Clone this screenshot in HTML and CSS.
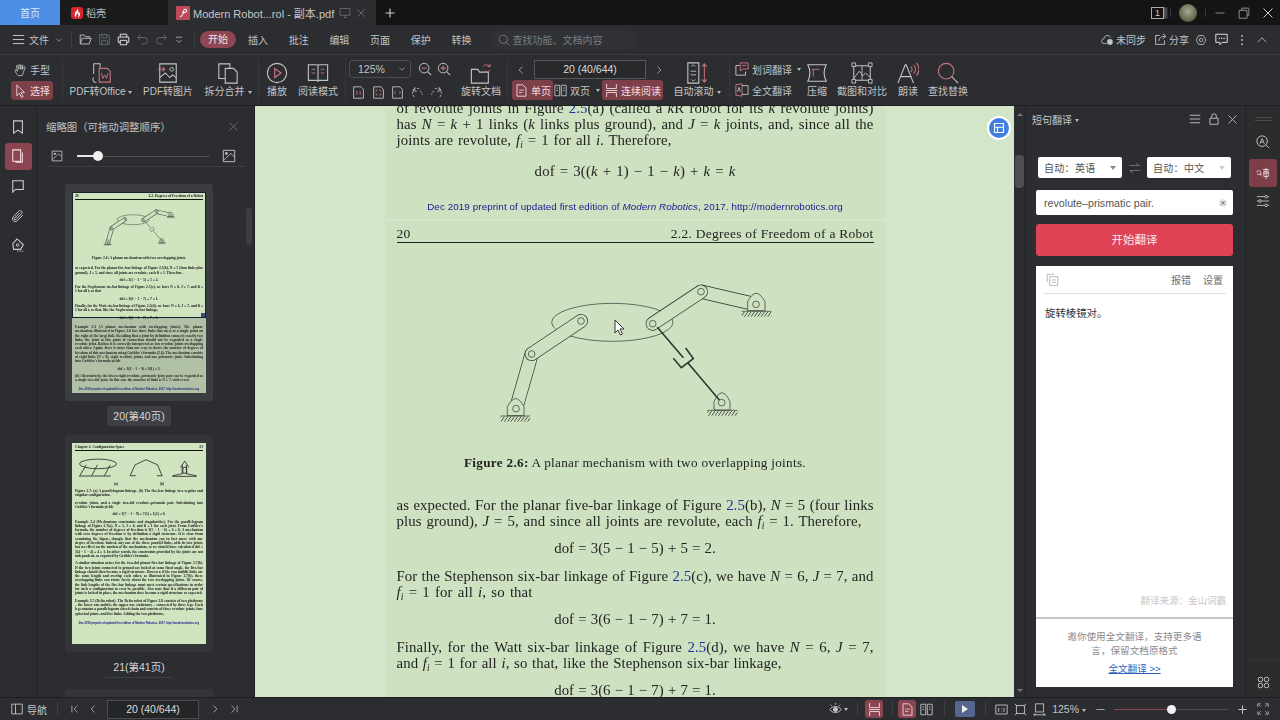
FILE: index.html
```html
<!DOCTYPE html>
<html lang="zh-CN">
<head>
<meta charset="utf-8">
<title>Modern Robotics</title>
<link rel="stylesheet" href="styles.css">
</head>
<body>
<svg class="sprite" aria-hidden="true">
  <defs>
    <pattern id="hatch" width="10" height="10" patternUnits="userSpaceOnUse" patternTransform="skewX(-35)">
      <rect width="2.4" height="10" fill="#333"/>
    </pattern>
  </defs>
  <symbol id="mech" viewBox="0 0 930 480">
    <g class="m">
      <ellipse cx="397" cy="157" rx="182" ry="57"/>
      <line class="bar-o" x1="108" y1="416" x2="155" y2="252"/><line class="bar-i" x1="108" y1="416" x2="155" y2="252"/>
      <line class="bar-o" x1="155" y1="252" x2="303" y2="153"/><line class="bar-i" x1="155" y1="252" x2="303" y2="153"/>
      <line class="bar-o" x1="663" y1="65" x2="828" y2="103"/><line class="bar-i" x1="663" y1="65" x2="828" y2="103"/>
      <line class="bar-o" x1="518" y1="161" x2="663" y2="65"/><line class="bar-i" x1="518" y1="161" x2="663" y2="65"/>
      <path d="M803 122V95Q828 45 855 95V122Z"/>
      <path d="M82 437V410Q107 362 132 410V437Z"/>
      <path d="M702 420V395Q726 342 750 395V420Z"/>
      <line class="thick" x1="532" y1="172" x2="610" y2="263"/>
      <line class="thick" x1="624" y1="279" x2="725" y2="398"/>
      <path class="thick" d="M617 234L640 266L604 293L580 265"/>
      <circle cx="155" cy="252" r="10"/><circle cx="303" cy="153" r="10"/><circle cx="518" cy="161" r="10"/>
      <circle cx="663" cy="65" r="10"/><circle cx="828" cy="103" r="10"/><circle cx="108" cy="416" r="10"/><circle cx="725" cy="398" r="10"/>
      <line x1="62" y1="438" x2="150" y2="438"/><line x1="682" y1="421" x2="772" y2="421"/><line x1="785" y1="124" x2="874" y2="124"/>
    </g>
    <rect x="62" y="440" width="88" height="15" fill="url(#hatch)"/>
    <rect x="682" y="423" width="90" height="14" fill="url(#hatch)"/>
    <rect x="785" y="126" width="89" height="14" fill="url(#hatch)"/>
  </symbol>
  <symbol id="i-ham" viewBox="0 0 16 16"><path d="M1 3h14M1 8h14M1 13h14" fill="none" stroke="currentColor" stroke-width="1.2"/></symbol>
  <symbol id="i-chev" viewBox="0 0 16 16"><path d="M3 5.5l5 5 5-5" fill="none" stroke="currentColor" stroke-width="1.3"/></symbol>
  <symbol id="i-left" viewBox="0 0 16 16"><path d="M10.5 2.5L5 8l5.5 5.5" fill="none" stroke="currentColor" stroke-width="1.2"/></symbol>
  <symbol id="i-right" viewBox="0 0 16 16"><path d="M5.5 2.5L11 8l-5.5 5.5" fill="none" stroke="currentColor" stroke-width="1.2"/></symbol>
  <symbol id="i-folder" viewBox="0 0 16 16"><path d="M1.5 13.5V2.5h5l1.500 2h5v2M1.5 13.5l2.5-7h11l-2.5 7z" fill="none" stroke="currentColor" stroke-width="1.1"/></symbol>
  <symbol id="i-save" viewBox="0 0 16 16"><path d="M2 2h10l2 2v10H2zM5 2v4h6V2M4.5 14V9.5h7V14" fill="none" stroke="currentColor" stroke-width="1.1"/></symbol>
  <symbol id="i-print" viewBox="0 0 16 16"><path d="M4 5V1.5h8V5M4 11.5H1.5V5h13v6.5H12M4 9h8v5.5H4z" fill="none" stroke="currentColor" stroke-width="1.2"/></symbol>
  <symbol id="i-undo" viewBox="0 0 16 16"><path d="M5.5 2L2 5.5 5.5 9M2 5.5h8a3.5 3.5 0 0 1 0 8H7" fill="none" stroke="currentColor" stroke-width="1.1"/></symbol>
  <symbol id="i-redo" viewBox="0 0 16 16"><path d="M10.5 2L14 5.5 10.5 9M14 5.5H6a3.5 3.5 0 0 0 0 8h3" fill="none" stroke="currentColor" stroke-width="1.1"/></symbol>
  <symbol id="i-more" viewBox="0 0 16 16"><path d="M3 3.5h10M4 8l4 4 4-4" fill="none" stroke="currentColor" stroke-width="1.2"/></symbol>
  <symbol id="i-search" viewBox="0 0 16 16"><circle cx="7" cy="7" r="5.500" fill="none" stroke="currentColor" stroke-width="1.1"/><path d="M11 11l4 4" stroke="currentColor" stroke-width="1.2"/></symbol>
  <symbol id="i-cloud" viewBox="0 0 16 16"><path d="M7 13H4a3 3 0 0 1-.5-6A4.5 4.5 0 0 1 12 5.5" fill="none" stroke="currentColor" stroke-width="1"/><circle cx="11" cy="11" r="3.5" fill="currentColor"/></symbol>
  <symbol id="i-share" viewBox="0 0 16 16"><path d="M7 3H2v11h11V9M6 10c0-4 3-6 8-6M11 1l3.5 3L11 7" fill="none" stroke="currentColor" stroke-width="1.1"/></symbol>
  <symbol id="i-gear" viewBox="0 0 16 16"><path d="M5 2h6l3.5 6-3.5 6H5L1.5 8z" fill="none" stroke="currentColor" stroke-width="1.1"/><circle cx="8" cy="8" r="2.3" fill="none" stroke="currentColor" stroke-width="1.1"/></symbol>
  <symbol id="i-msg" viewBox="0 0 16 16"><path d="M1 1.5h14v10H9l-3 3v-3H1z" fill="none" stroke="currentColor" stroke-width="1.2"/><path d="M4.5 6.5h1.5M7.5 6.5h1.5M10.5 6.5h1.5" stroke="currentColor" stroke-width="1.5"/></symbol>
  <symbol id="i-dots" viewBox="0 0 16 16"><circle cx="8" cy="2.500" r="1.2" fill="currentColor"/><circle cx="8" cy="8" r="1.2" fill="currentColor"/><circle cx="8" cy="13.500" r="1.2" fill="currentColor"/></symbol>
  <symbol id="i-up" viewBox="0 0 16 16"><path d="M2 11l6-6 6 6" fill="none" stroke="currentColor" stroke-width="1.1"/></symbol>
  <symbol id="i-x" viewBox="0 0 16 16"><path d="M2 2l12 12M14 2L2 14" fill="none" stroke="currentColor" stroke-width="1.2"/></symbol>
  <symbol id="i-hand" viewBox="0 0 20 20"><path d="M6 18c-2-2-4-5-4.5-7-.3-1.3 1.3-1.8 2-.8L5 12 3.5 4.5c-.2-1.3 1.6-1.7 2-.4L7 9 7 2.8c0-1.3 1.8-1.3 2 0L9.5 9l1.3-5.6c.3-1.2 2-.9 1.8.3L11.5 9.5l2.8-3.7c.8-1 2.200 0 1.600 1L13.500 13c-.5 2-1 3.500-2 5z" fill="none" stroke="currentColor" stroke-width="1.2"/></symbol>
  <symbol id="i-cursor" viewBox="0 0 20 20"><path d="M4 1.5l11 10.5h-5l3 6-2.5 1-2.8-6L4 17z" fill="none" stroke="currentColor" stroke-width="1.2"/></symbol>
  <symbol id="i-office" viewBox="0 0 24 24"><path d="M4 13V2h7v4M4 17a3 3 0 0 0 3 5" fill="none" stroke="currentColor" stroke-width="1.1"/><path d="M10 7h9l3 3v12H10z" fill="none" stroke="#c9737f" stroke-width="1.2"/><path d="M12.5 12l1.5 6 2-4 2 4 1.5-6" fill="none" stroke="#c9737f" stroke-width="1"/></symbol>
  <symbol id="i-topic" viewBox="0 0 24 24"><path d="M3 2h18v20H3z" fill="none" stroke="currentColor" stroke-width="1.2"/><path d="M3 17l6-5 5 5 3-3 4 3" fill="none" stroke="currentColor" stroke-width="1.1"/><circle cx="16" cy="8" r="2" fill="none" stroke="currentColor"/><path d="M1 8h7M6 5.5L8.5 8 6 10.5" fill="none" stroke="#c9737f" stroke-width="1.1"/></symbol>
  <symbol id="i-split" viewBox="0 0 24 24"><path d="M2 2h12v16H2z" fill="none" stroke="currentColor" stroke-width="1.2"/><path d="M9 7h9l4 4v12H9z" fill="#2b2d30" stroke="currentColor" stroke-width="1.2"/></symbol>
  <symbol id="i-play" viewBox="0 0 24 24"><circle cx="12" cy="12" r="10.5" fill="none" stroke="currentColor" stroke-width="1.2"/><path d="M9.5 7l7 5-7 5z" fill="none" stroke="#c9737f" stroke-width="1.3"/></symbol>
  <symbol id="i-book" viewBox="0 0 24 24"><path d="M1.5 3h9.5l1 1 1-1h9.5v17h-9l-1.5 1-1.5-1h-9zM12 4v16" fill="none" stroke="currentColor" stroke-width="1.2"/><path d="M5 8h4M5 12h4M15 8h4M15 12h4" stroke="#c9737f" stroke-width="1"/></symbol>
  <symbol id="i-zout" viewBox="0 0 16 16"><circle cx="7" cy="7" r="5.5" fill="none" stroke="currentColor" stroke-width="1.1"/><path d="M11 11l4 4" stroke="currentColor" stroke-width="1.3"/><path d="M4 7h6" stroke="#c9737f" stroke-width="1.2"/></symbol>
  <symbol id="i-zin" viewBox="0 0 16 16"><circle cx="7" cy="7" r="5.5" fill="none" stroke="currentColor" stroke-width="1.1"/><path d="M11 11l4 4" stroke="currentColor" stroke-width="1.3"/><path d="M4 7h6M7 4v6" stroke="#c9737f" stroke-width="1.2"/></symbol>
  <symbol id="i-f11" viewBox="0 0 16 16"><path d="M2 1h9l3 3v11H2z" fill="none" stroke="currentColor" stroke-width="1.1"/><path d="M6 6v5M10 6v5" stroke="#c9737f" stroke-width="1.1"/></symbol>
  <symbol id="i-fit" viewBox="0 0 16 16"><path d="M2 1h9l3 3v11H2z" fill="none" stroke="currentColor" stroke-width="1.1"/><path d="M5 7V5h2M11 9v2H9M5 9v2h2M11 7V5H9" fill="none" stroke="#c9737f" stroke-width="1"/></symbol>
  <symbol id="i-fw" viewBox="0 0 16 16"><path d="M2 1h9l3 3v11H2z" fill="none" stroke="currentColor" stroke-width="1.1"/><path d="M6 6L4 8l2 2M10 6l2 2-2 2" fill="none" stroke="#c9737f" stroke-width="1"/></symbol>
  <symbol id="i-rl" viewBox="0 0 16 16"><path d="M4 13.5A6 6 0 0 1 8 3h2M11 6A6 6 0 0 1 14 11" fill="none" stroke="currentColor" stroke-width="1.1" stroke-dasharray="3 1.5"/><path d="M5 1.5L2.5 5.5 7 6.5" fill="none" stroke="currentColor" stroke-width="1.1"/></symbol>
  <symbol id="i-rr" viewBox="0 0 16 16"><path d="M12 13.5A6 6 0 0 0 8 3H6M5 6A6 6 0 0 0 2 11" fill="none" stroke="currentColor" stroke-width="1.1" stroke-dasharray="3 1.5"/><path d="M11 1.5l2.5 4L9 6.5" fill="none" stroke="currentColor" stroke-width="1.1"/></symbol>
  <symbol id="i-rot" viewBox="0 0 24 24"><path d="M1.5 8h7l2 3h9.5v12H1.5z" fill="none" stroke="currentColor" stroke-width="1.2"/><path d="M14 5a5 5 0 0 1 8 0M22 2v3h-3M22 9a5 5 0 0 1-6 1" fill="none" stroke="#c9737f" stroke-width="1"/></symbol>
  <symbol id="i-page" viewBox="0 0 16 16"><path d="M2.5 1h7l4 4v10h-11z" fill="none" stroke="currentColor" stroke-width="1.1"/><path d="M5 7.5h6M5 10.5h4" stroke="currentColor"/></symbol>
  <symbol id="i-dbl" viewBox="0 0 16 16"><path d="M1 1.5h6v13H1zM9 1.5h6v13H9zM3 5h2M11 5h2M3 8h2M11 8h2" fill="none" stroke="currentColor" stroke-width="1.1"/></symbol>
  <symbol id="i-cont" viewBox="0 0 16 16"><path d="M2 0v5.5h12V0M2 16v-5.5h12V16M1 8h14" fill="none" stroke="currentColor" stroke-width="1.1"/></symbol>
  <symbol id="i-auto" viewBox="0 0 24 24"><path d="M2 1h12v22H2z" fill="none" stroke="currentColor" stroke-width="1.2"/><path d="M6 5l2-2 2 2M6 19l2 2 2-2M5 10h6M5 14h6" fill="none" stroke="currentColor"/><path d="M20 2v20M17.5 5L20 2l2.5 3M17.5 19l2.5 3 2.5-3" fill="none" stroke="#c9737f" stroke-width="1.1"/></symbol>
  <symbol id="i-tr1" viewBox="0 0 16 16"><path d="M5 4H1v11h11v-4" fill="none" stroke="currentColor" stroke-width="1.1"/><path d="M6 1h9v7H9l-3 2z" fill="none" stroke="#c9737f" stroke-width="1.1"/><path d="M8 4h5" stroke="#c9737f"/></symbol>
  <symbol id="i-tr2" viewBox="0 0 16 16"><path d="M1 2l7-1v14l-7-1z" fill="none" stroke="#c9737f" stroke-width="1.1"/><path d="M8 3h7v10H8M3 10l1.5-5L6 10" fill="none" stroke="currentColor"/></symbol>
  <symbol id="i-comp" viewBox="0 0 24 24"><path d="M2 3h20c-3 6-3 12 0 18H2c3-6 3-12 0-18z" fill="none" stroke="currentColor" stroke-width="1.2"/><path d="M6 8h9M8 8v8" fill="none" stroke="#c9737f"/></symbol>
  <symbol id="i-shot" viewBox="0 0 24 24"><path d="M3 4h18v16H3z" fill="none" stroke="currentColor" stroke-width="1.1"/><path d="M1 1h4v4H1zM19 1h4v4h-4zM1 19h4v4H1zM19 19h4v4h-4z" fill="#2b2d30" stroke="currentColor"/><path d="M3 18l6-8 4 5 3-3 5 5M12 4v16" fill="none" stroke="currentColor"/></symbol>
  <symbol id="i-read" viewBox="0 0 24 24"><path d="M1 23L9 3h1l8 20M4 16h12" fill="none" stroke="currentColor" stroke-width="1.2"/><path d="M15 5c2 1.5 2 4 0 6M18 3c3 3 3 7 0 10M21 1c4 4 4 10 0 14" fill="none" stroke="#c9737f" stroke-width="1.1"/></symbol>
  <symbol id="i-find" viewBox="0 0 24 24"><circle cx="10" cy="10" r="8.5" fill="none" stroke="#c9737f" stroke-width="1.2"/><path d="M16 16l7 7" stroke="currentColor" stroke-width="1.2"/></symbol>
  <symbol id="i-bookmark" viewBox="0 0 16 16"><path d="M3 1h10v14l-5-3.5L3 15z" fill="none" stroke="currentColor" stroke-width="1.2"/></symbol>
  <symbol id="i-thumbs" viewBox="0 0 16 16"><path d="M2 1h9v13H2zM13 4v11H5" fill="none" stroke="currentColor" stroke-width="1.2"/></symbol>
  <symbol id="i-note" viewBox="0 0 16 16"><path d="M2 2h12v10H5l-3 3z" fill="none" stroke="currentColor" stroke-width="1.2"/></symbol>
  <symbol id="i-clip" viewBox="0 0 16 16"><path d="M13.5 7L7 13.5c-3 2.5-7-1.5-4.5-4.5L9 2.5c2-2 5 1 3 3L5.5 12c-1 1-2.5-.5-1.5-1.5L10 4.5" fill="none" stroke="currentColor" stroke-width="1.1"/></symbol>
  <symbol id="i-sign" viewBox="0 0 16 16"><path d="M7 1L2 6.5l1 6.5h8l3-5.5z" fill="none" stroke="currentColor" stroke-width="1.2"/><circle cx="7.5" cy="8" r="1.5" fill="none" stroke="currentColor"/><path d="M7 15h8" stroke="currentColor" stroke-dasharray="1.5 1"/></symbol>
  <symbol id="i-img" viewBox="0 0 16 16"><path d="M1.5 1.5h13v13h-13z" fill="none" stroke="currentColor" stroke-width="1.1"/><circle cx="5" cy="5" r="1.5" fill="currentColor"/><path d="M2 13L10 5l4 4" fill="none" stroke="currentColor"/></symbol>
  <symbol id="i-lock" viewBox="0 0 16 16"><path d="M2.5 7h11v8h-11zM5 7V4a3 3 0 0 1 6 0v3" fill="none" stroke="currentColor" stroke-width="1.2"/></symbol>
  <symbol id="i-copy" viewBox="0 0 16 16"><path d="M1.5 11V1.5H10M4.5 4.5h10v11h-10zM7 8.5h5M7 11.5h5" fill="none" stroke="currentColor" stroke-width="1"/></symbol>
  <symbol id="i-lens" viewBox="0 0 16 16"><circle cx="7" cy="7" r="6" fill="none" stroke="currentColor" stroke-width="1.1"/><path d="M4.5 10L7 4l2.5 6M5.5 8h3M11.5 11.5l3.5 3.5" fill="none" stroke="currentColor"/></symbol>
  <symbol id="i-aw" viewBox="0 0 16 16"><path d="M1 7.500c0-3 4.500-3 4.500 0v3.500M1.500 9.500h4M8 4h7M8 8h7M9 6h5v6H9zM11.500 2v13" fill="none" stroke="currentColor" stroke-width="1"/></symbol>
  <symbol id="i-tune" viewBox="0 0 16 16"><path d="M1 3h9M13 3h2M1 8h2M6 8h9M1 13h9M13 13h2" stroke="currentColor"/><circle cx="11.5" cy="3" r="1.5" fill="none" stroke="currentColor"/><circle cx="4.5" cy="8" r="1.5" fill="none" stroke="currentColor"/><circle cx="11.5" cy="13" r="1.5" fill="none" stroke="currentColor"/></symbol>
  <symbol id="i-grid" viewBox="0 0 16 16"><rect x="1.5" y="1.500" width="5.500" height="5.500" rx="2.500" fill="none" stroke="currentColor" stroke-width="1.2"/><rect x="9" y="1.500" width="5.500" height="5.500" rx="2.500" fill="none" stroke="currentColor" stroke-width="1.2"/><rect x="1.500" y="9" width="5.500" height="5.500" rx="2.500" fill="none" stroke="currentColor" stroke-width="1.2"/><rect x="9" y="9" width="5.500" height="5.500" rx="2.500" fill="none" stroke="currentColor" stroke-width="1.2"/></symbol>
  <symbol id="i-nav" viewBox="0 0 16 16"><path d="M1 1.5h14v13H1zM6 1.5v13" fill="none" stroke="currentColor" stroke-width="1.2"/></symbol>
  <symbol id="i-first" viewBox="0 0 16 16"><path d="M3 2.5v11M12 2.5L6.5 8l5.5 5.5" fill="none" stroke="currentColor" stroke-width="1.2"/></symbol>
  <symbol id="i-last" viewBox="0 0 16 16"><path d="M13 2.5v11M4 2.5L9.5 8 4 13.5" fill="none" stroke="currentColor" stroke-width="1.2"/></symbol>
  <symbol id="i-eye" viewBox="0 0 16 16"><path d="M1 8c3-5 11-5 14 0-3 5-11 5-14 0z" fill="none" stroke="currentColor" stroke-width="1.1"/><circle cx="8" cy="8" r="3" fill="currentColor"/><path d="M8 0v2M2 2l1.5 1.5M14 2l-1.5 1.5" stroke="currentColor"/></symbol>
  <symbol id="i-11" viewBox="0 0 16 16"><path d="M1 2.5h14v11H1zM4.5 6v5M11 6v5M8 6.5v.8M8 9.5v.8" fill="none" stroke="currentColor" stroke-width="1.1"/></symbol>
  <symbol id="i-fitp" viewBox="0 0 16 16"><path d="M3 3h10v10H3zM1 1l3 3M15 1l-3 3M1 15l3-3M15 15l-3-3" fill="none" stroke="currentColor" stroke-width="1.1"/></symbol>
  <symbol id="i-fitw" viewBox="0 0 16 16"><path d="M3 1h10v10H3zM1 14.5h14M3 12.5l-2 2 2 1.5M13 12.5l2 2-2 1.5" fill="none" stroke="currentColor" stroke-width="1.1"/></symbol>
  <symbol id="i-full" viewBox="0 0 16 16"><path d="M1 5V1h4M15 5V1h-4M1 11v4h4M15 11v4h-4M2 2l3 3M14 2l-3 3M2 14l3-3M14 14l-3-3" fill="none" stroke="currentColor"/></symbol>
  <symbol id="i-mon" viewBox="0 0 16 16"><path d="M1.5 2h13v9h-13zM6 14h4M8 11v3" fill="none" stroke="currentColor" stroke-width="1.1"/></symbol>
  <symbol id="i-plus" viewBox="0 0 16 16"><path d="M2 8h12M8 2v12" stroke="currentColor" stroke-width="1.5"/></symbol>
  <symbol id="i-min" viewBox="0 0 16 16"><path d="M2 8h12" stroke="currentColor" stroke-width="1.1"/></symbol>
  <symbol id="i-rest" viewBox="0 0 16 16"><path d="M5 4V1.5h9.5V11H12M1.5 4.5H12V15H1.5z" fill="none" stroke="currentColor" stroke-width="1.1"/></symbol>
  <symbol id="i-flame" viewBox="0 0 16 16"><path d="M8 2c1 3-3 4-3 8 0 2 1 3 2 4-1-3 1-4 1-6 2 2 3 3 1 6 3-1 4-4 2-7-1 1-1 1-1 0 0-2-1-4-2-5z" fill="#fff"/></symbol>
</svg>

<div class="app">
  <header class="tabbar">
    <div class="tab tab-home">首页</div>
    <div class="tab tab-dao"><span class="logo-dao"><svg class="ic12"><use href="#i-flame"/></svg></span><span>稻壳</span></div>
    <div class="tab tab-doc">
      <span class="logo-pdf"><svg class="ic12" viewBox="0 0 16 16"><path d="M4 13c3-1 5-5 5-8a2 2 0 1 1 4 0c0 2-3 3-6 2" fill="none" stroke="#fff" stroke-width="1.4"/></svg></span>
      <span class="doc-name">Modern Robot...rol - 副本.pdf</span>
      <svg class="ic12 dim"><use href="#i-mon"/></svg>
      <svg class="ic10 dim2"><use href="#i-x"/></svg>
    </div>
    <svg class="ic12 tab-plus"><use href="#i-plus"/></svg>
    <div class="win-ctrls">
      <span class="win-1">1</span>
      <span class="vsep"></span>
      <span class="avatar"></span>
      <span class="vsep"></span>
      <svg class="ic12"><use href="#i-min"/></svg>
      <svg class="ic12"><use href="#i-rest"/></svg>
      <svg class="ic12 bright"><use href="#i-x"/></svg>
    </div>
  </header>

  <nav class="menubar">
    <svg class="ic13"><use href="#i-ham"/></svg>
    <span class="menu-file">文件</span>
    <svg class="ic8 m-chev"><use href="#i-chev"/></svg>
    <span class="menu-sep"></span>
    <div class="quick">
      <svg class="ic13"><use href="#i-folder"/></svg>
      <svg class="ic13 faint"><use href="#i-save"/></svg>
      <svg class="ic13 bright"><use href="#i-print"/></svg>
      <svg class="ic13 faint"><use href="#i-undo"/></svg>
      <svg class="ic13 faint"><use href="#i-redo"/></svg>
      <svg class="ic10"><use href="#i-more"/></svg>
    </div>
    <span class="menu-sep"></span>
    <span class="pill">开始</span>
    <div class="menu-items"><span>插入</span><span>批注</span><span>编辑</span><span>页面</span><span>保护</span><span>转换</span></div>
    <div class="searchbox"><svg class="ic12"><use href="#i-search"/></svg><span>查找功能、文档内容</span></div>
    <div class="menu-right">
      <span class="mr"><svg class="ic13"><use href="#i-cloud"/></svg>未同步</span>
      <span class="mr mr2"><svg class="ic13"><use href="#i-share"/></svg>分享</span>
      <svg class="ic12"><use href="#i-gear"/></svg>
      <svg class="ic13 bright"><use href="#i-msg"/></svg>
      <svg class="ic12"><use href="#i-dots"/></svg>
      <svg class="ic12"><use href="#i-up"/></svg>
    </div>
  </nav>

  <section class="toolbar">
    <div class="hand">
      <div class="hand-row"><svg class="ic14"><use href="#i-hand"/></svg>手型</div>
      <div class="hand-row sel"><svg class="ic14"><use href="#i-cursor"/></svg>选择</div>
    </div>
    <span class="t-sep"></span>
    <div class="tcol"><svg class="ic22"><use href="#i-office"/></svg><span>PDF转Office<i class="caret"></i></span></div>
    <div class="tcol"><svg class="ic22"><use href="#i-topic"/></svg><span>PDF转图片</span></div>
    <div class="tcol"><svg class="ic22"><use href="#i-split"/></svg><span>拆分合并<i class="caret"></i></span></div>
    <span class="t-sep"></span>
    <div class="tcol"><svg class="ic22"><use href="#i-play"/></svg><span>播放</span></div>
    <div class="tcol"><svg class="ic22"><use href="#i-book"/></svg><span>阅读模式</span></div>
    <span class="t-sep"></span>
    <div class="zoomg">
      <div class="zoom-row">
        <div class="zoom-sel">125%<svg class="ic8"><use href="#i-chev"/></svg></div>
        <svg class="ic14"><use href="#i-zout"/></svg>
        <svg class="ic14"><use href="#i-zin"/></svg>
      </div>
      <div class="zoom-row2">
        <svg class="ic13"><use href="#i-f11"/></svg>
        <svg class="ic13"><use href="#i-fit"/></svg>
        <svg class="ic13"><use href="#i-fw"/></svg>
        <svg class="ic13"><use href="#i-rl"/></svg>
        <svg class="ic13"><use href="#i-rr"/></svg>
      </div>
    </div>
    <div class="tcol"><svg class="ic22"><use href="#i-rot"/></svg><span>旋转文档</span></div>
    <span class="t-sep"></span>
    <div class="navg">
      <div class="nav-row">
        <svg class="ic10"><use href="#i-left"/></svg>
        <div class="nav-input">20 (40/644)</div>
        <svg class="ic10"><use href="#i-right"/></svg>
      </div>
      <div class="view-row">
        <span class="view sel v-one"><svg class="ic13"><use href="#i-page"/></svg>单页</span>
        <span class="view v-two"><svg class="ic13"><use href="#i-dbl"/></svg>双页<i class="caret"></i></span>
        <span class="view sel v-cont"><svg class="ic13"><use href="#i-cont"/></svg>连续阅读</span>
      </div>
    </div>
    <div class="tcol"><svg class="ic22"><use href="#i-auto"/></svg><span>自动滚动<i class="caret"></i></span></div>
    <span class="t-sep"></span>
    <div class="trang">
      <span><svg class="ic14"><use href="#i-tr1"/></svg>划词翻译<i class="caret"></i></span>
      <span><svg class="ic14"><use href="#i-tr2"/></svg>全文翻译</span>
    </div>
    <div class="tcol"><svg class="ic22"><use href="#i-comp"/></svg><span>压缩</span></div>
    <div class="tcol"><svg class="ic22"><use href="#i-shot"/></svg><span>截图和对比</span></div>
    <div class="tcol"><svg class="ic22"><use href="#i-read"/></svg><span>朗读</span></div>
    <div class="tcol"><svg class="ic22"><use href="#i-find"/></svg><span>查找替换</span></div>
  </section>

  <main class="main">
    <aside class="rail">
      <svg class="ic14"><use href="#i-bookmark"/></svg>
      <span class="rail-sel"><svg class="ic14"><use href="#i-thumbs"/></svg></span>
      <svg class="ic14"><use href="#i-note"/></svg>
      <svg class="ic14"><use href="#i-clip"/></svg>
      <svg class="ic14"><use href="#i-sign"/></svg>
    </aside>

    <aside class="thumbs">
      <div class="th-title"><span>缩略图（可拖动调整顺序）</span><svg class="ic11 dim"><use href="#i-x"/></svg></div>
      <div class="th-slider">
        <svg class="ic12"><use href="#i-img"/></svg>
        <div class="th-track"><span class="th-fill"></span><span class="th-knob"></span></div>
        <svg class="ic14"><use href="#i-img"/></svg>
      </div>
      <div class="th-list">
        <div class="th-card">
          <div class="thumb">
            <div class="tt-head"><span>20</span><span>2.2. Degrees of Freedom of a Robot</span></div>
            <svg class="tt-mech"><use href="#mech"/></svg>
            <p class="tt-cap">Figure 2.6: A planar mechanism with two overlapping joints.</p>
            <p>as expected. For the planar five-bar linkage of Figure 2.5(b), N = 5 (four links plus ground), J = 5, and since all joints are revolute, each fi = 1. Therefore,</p>
            <p class="tt-eq">dof = 3(5 − 1 − 5) + 5 = 2.</p>
            <p>For the Stephenson six-bar linkage of Figure 2.5(c), we have N = 6, J = 7, and fi = 1 for all i, so that</p>
            <p class="tt-eq">dof = 3(6 − 1 − 7) + 7 = 1.</p>
            <p>Finally, for the Watt six-bar linkage of Figure 2.5(d), we have N = 6, J = 7, and fi = 1 for all i, so that, like the Stephenson six-bar linkage,</p>
            <p class="tt-eq">dof = 3(6 − 1 − 7) + 7 = 1.</p>
            <p class="tt-gap">Example 2.3 (A planar mechanism with overlapping joints). The planar mechanism illustrated in Figure 2.6 has three links that meet at a single point on the right of the large link. Recalling that a joint by definition connects exactly two links, the joint at this point of connection should not be regarded as a single revolute joint. Rather, it is correctly interpreted as two revolute joints overlapping each other. Again, there is more than one way to derive the number of degrees of freedom of this mechanism using Grübler's formula (2.4). The mechanism consists of eight links (N = 8), eight revolute joints, and one prismatic joint. Substituting into Grübler's formula yields</p>
            <p class="tt-eq">dof = 3(8 − 1 − 9) + 9(1) = 3.</p>
            <p>(ii) Alternatively, the lower-right revolute–prismatic joint pair can be regarded as a single two-dof joint. In this case the number of links is N = 7, with seven</p>
            <p class="tt-foot">Dec 2019 preprint of updated first edition of Modern Robotics, 2017. http://modernrobotics.org</p>
            <span class="thumb-dim"></span>
            <span class="thumb-view"><i></i></span>
          </div>
        </div>
        <div class="th-label">20(第40页)</div>
        <div class="th-card">
          <div class="thumb">
            <div class="tt-head"><span>Chapter 2. Configuration Space</span><span>21</span></div>
            <svg class="tt-mech2" viewBox="0 0 400 66">
              <ellipse cx="72" cy="17" rx="58" ry="15" />
              <path d="M15 54L35 20M52 54L70 20M92 54L110 20M12 55h100M172 54L188 20 222 4 258 20 272 54M172 54h18M256 54h18M305 54L335 48V20M380 54L348 48V20M304 56h76M330 28L343 8 356 28M337 28h12V46h-12z"/>
            </svg>
            <p class="tt-small"><span>(a)</span><span>(b)</span></p>
            <p class="tt-bold">Figure 2.7: (a) A parallelogram linkage. (b) The five-bar linkage in a regular and singular configuration.</p>
            <p class="tt-m">revolute joints, and a single two-dof revolute–prismatic pair. Substituting into Grübler's formula yields</p>
            <p class="tt-eq">dof = 3(7 − 1 − 9) + 7(1) + 1(2) = 0.</p>
            <p class="tt-m">Example 2.4 (Mechanisms constraints and singularities). For the parallelogram linkage of Figure 2.7(a), N = 5, J = 6, and fi = 1 for each joint. From Grübler's formula, the number of degrees of freedom is 3(5 − 1 − 6) + 6 = 0. A mechanism with zero degrees of freedom is by definition a rigid structure. It is clear from examining the figure, though, that the mechanism can in fact move with one degree of freedom. Indeed, any one of the three parallel links, with its two joints, has no effect on the motion of the mechanism, so we should have calculated dof = 3(4 − 1 − 4) + 4 = 1. In other words, the constraints provided by the joints are not independent, as required by Grübler's formula.</p>
            <p>A similar situation arises for the two-dof planar five-bar linkage of Figure 2.7(b). If the two joints connected to ground are locked at some fixed angle, the five-bar linkage should then become a rigid structure. However, if the two middle links are the same length and overlap each other, as illustrated in Figure 2.7(b), these overlapping links can rotate freely about the two overlapping joints. Of course, the link lengths of the five-bar linkage must meet certain specifications in order for such a configuration to even be possible. Also note that if a different pair of joints is locked in place, the mechanism does become a rigid structure as expected.</p>
            <p class="tt-m">Example 2.5 (Delta robot). The Delta robot of Figure 2.8 consists of two platforms – the lower one mobile, the upper one stationary – connected by three legs. Each leg contains a parallelogram closed chain and consists of three revolute joints, four spherical joints, and five links. Adding the two platforms,</p>
            <p class="tt-foot tt-foot2">Dec 2019 preprint of updated first edition of Modern Robotics, 2017. http://modernrobotics.org</p>
          </div>
        </div>
        <div class="th-label th-label2">21(第41页)</div>
        <div class="th-card">
          <div class="thumb">
            <div class="tt-head"><span>22</span><span>2.2. Degrees of Freedom of a Robot</span></div>
          </div>
        </div>
      </div>
      <span class="th-scroll"></span>
    </aside>

    <div class="doc">
      <article class="page page-a">
        <p class="ln clip">of revolute joints in Figure <b class="lnk">2.5</b>(a) (called a <i>k</i>R robot for its <i>k</i> revolute joints)</p>
        <p class="ln">has <i>N</i> = <i>k</i> + 1 links (<i>k</i> links plus ground), and <i>J</i> = <i>k</i> joints, and, since all the</p>
        <p class="ln end-a">joints are revolute, <i>f<sub>i</sub></i> = 1 for all <i>i</i>. Therefore,</p>
        <p class="eq eq1">dof = 3((<i>k</i> + 1) − 1 − <i>k</i>) + <i>k</i> = <i>k</i></p>
        <p class="foot">Dec 2019 preprint of updated first edition of <i>Modern Robotics</i>, 2017. http://modernrobotics.org</p>
      </article>
      <article class="page page-b">
        <div class="head"><span>20</span><span>2.2. Degrees of Freedom of a Robot</span></div>
        <svg class="fig"><use href="#mech"/></svg>
        <p class="cap"><b>Figure 2.6:</b> A planar mechanism with two overlapping joints.</p>
        <p class="ln">as expected. For the planar five-bar linkage of Figure <b class="lnk">2.5</b>(b), <i>N</i> = 5 (four links</p>
        <p class="ln end-b">plus ground), <i>J</i> = 5, and since all joints are revolute, each <i>f<sub>i</sub></i> = 1. Therefore,</p>
        <p class="eq eq2">dof = 3(5 − 1 − 5) + 5 = 2.</p>
        <p class="ln">For the Stephenson six-bar linkage of Figure <b class="lnk">2.5</b>(c), we have <i>N</i> = 6, <i>J</i> = 7, and</p>
        <p class="ln end-c"><i>f<sub>i</sub></i> = 1 for all <i>i</i>, so that</p>
        <p class="eq eq2">dof = 3(6 − 1 − 7) + 7 = 1.</p>
        <p class="ln">Finally, for the Watt six-bar linkage of Figure <b class="lnk">2.5</b>(d), we have <i>N</i> = 6, <i>J</i> = 7,</p>
        <p class="ln end-d">and <i>f<sub>i</sub></i> = 1 for all <i>i</i>, so that, like the Stephenson six-bar linkage,</p>
        <p class="eq eq2">dof = 3(6 − 1 − 7) + 7 = 1.</p>
      </article>
      <span class="fab"><svg class="ic12" viewBox="0 0 16 16"><path d="M2 2h12v12H2zM2 7h12M6 7v7" fill="none" stroke="#fff" stroke-width="1.5"/></svg></span>
      <svg class="pointer" viewBox="0 0 12 18"><path d="M1 1v13l3-3 2.5 5 2-1-2.5-5h4z" fill="#fff" stroke="#333" stroke-width="1"/></svg>
    </div>

    <div class="vscroll"><span class="vs-up"></span><span class="vs-thumb"></span><span class="vs-down"></span></div>

    <aside class="trans">
      <div class="tr-head">
        <span class="tr-title">短句翻译<i class="caret"></i></span>
        <svg class="ic12"><use href="#i-ham"/></svg>
        <svg class="ic12"><use href="#i-lock"/></svg>
        <svg class="ic11"><use href="#i-x"/></svg>
      </div>
      <div class="tr-langs">
        <div class="tr-sel">自动：英语<i class="caret dark"></i></div>
        <span class="tr-swap">⇌</span>
        <div class="tr-sel">自动：中文<i class="caret dark faint2"></i></div>
      </div>
      <div class="tr-input"><span>revolute–prismatic pair.</span><span class="tr-clear">×</span></div>
      <div class="tr-btn">开始翻译</div>
      <div class="tr-body">
        <div class="tr-bar"><svg class="ic13"><use href="#i-copy"/></svg><span class="tr-a">报错</span><span>设置</span></div>
        <p class="tr-text">旋转棱镜对。</p>
        <p class="tr-src">翻译来源：金山词霸</p>
      </div>
      <div class="tr-promo">
        <p>邀你使用全文翻译，支持更多语言，保留文档原格式</p>
        <a>全文翻译 &gt;&gt;</a>
      </div>
    </aside>

    <aside class="rrail">
      <span class="rr-lines"></span>
      <svg class="ic14"><use href="#i-lens"/></svg>
      <span class="rr-sel"><svg class="ic14"><use href="#i-aw"/></svg></span>
      <svg class="ic14"><use href="#i-tune"/></svg>
      <span class="rr-fill"></span>
      <svg class="ic13"><use href="#i-grid"/></svg>
    </aside>
  </main>

  <footer class="status">
    <svg class="ic12"><use href="#i-nav"/></svg>
    <span class="s-nav">导航</span>
    <span class="s-sep s-sep1"></span>
    <svg class="ic10 s-first"><use href="#i-first"/></svg>
    <svg class="ic10 s-prev"><use href="#i-left"/></svg>
    <div class="s-input">20 (40/644)</div>
    <svg class="ic10 s-next"><use href="#i-right"/></svg>
    <svg class="ic10 s-last"><use href="#i-last"/></svg>
    <div class="s-right">
      <svg class="ic13"><use href="#i-eye"/></svg><i class="caret"></i>
      <span class="s-sep s-sep-a"></span>
      <span class="s-sel"><svg class="ic13"><use href="#i-cont"/></svg></span>
      <span class="s-sep"></span>
      <span class="s-sel s-sel2"><svg class="ic13"><use href="#i-page"/></svg></span>
      <svg class="ic13 s-dbl"><use href="#i-dbl"/></svg>
      <span class="s-sep"></span>
      <span class="s-play"></span>
      <span class="s-sep"></span>
      <svg class="ic13"><use href="#i-11"/></svg>
      <svg class="ic13"><use href="#i-fitp"/></svg>
      <svg class="ic13"><use href="#i-fitw"/></svg>
      <span class="s-zoom">125%<i class="caret"></i></span>
      <svg class="ic11"><use href="#i-min"/></svg>
      <div class="s-track"><span class="s-fill"></span><span class="s-knob"></span></div>
      <svg class="ic11"><use href="#i-plus"/></svg>
      <svg class="ic12 s-full"><use href="#i-full"/></svg>
    </div>
  </footer>
</div>
</body>
</html>
```

FILE: styles.css
```css
* { box-sizing: border-box; }
html, body { margin: 0; padding: 0; height: 100%; overflow: hidden; }
body { font-family: "Liberation Sans", "Noto Sans CJK SC", sans-serif; font-size: 10px; color: #c4c4c4; background: #2b2d30; }
p { margin: 0; }
svg { flex: none; display: block; }
i { font-style: normal; }
.sprite { position: absolute; width: 0; height: 0; }
.app { display: flex; flex-direction: column; width: 1280px; height: 720px; }

.ic8 { width: 8px; height: 8px; }
.ic10 { width: 10px; height: 10px; }
.ic11 { width: 11px; height: 11px; }
.ic12 { width: 12px; height: 12px; }
.ic13 { width: 13px; height: 13px; }
.ic14 { width: 14px; height: 14px; }
.ic22 { width: 22px; height: 22px; }
.dim { color: #6e7072; }
.dim2 { color: #77797b; }
.faint { color: #6a6c6e; }
.bright { color: #e2e2e2; }

.caret { display: inline-block; width: 0; height: 0; margin-left: 3px; vertical-align: middle; border-left: 2.5px solid transparent; border-right: 2.5px solid transparent; border-top: 3px solid #bbb; }
.caret.dark { border-top-color: #888; margin-left: auto; border-left-width: 3px; border-right-width: 3px; border-top-width: 4px; }
.caret.faint2 { border-top-color: #ccc; }

/* tabs */
.tabbar { display: flex; align-items: stretch; height: 25px; background: #141414; flex: none; }
.tab { display: flex; align-items: center; }
.tab-home { width: 60px; justify-content: center; background: #4c8fe4; color: #dbe8fb; }
.tab-dao { width: 108px; padding-left: 11px; gap: 3px; background: #1b1b1b; color: #bdbdbd; }
.logo-dao { width: 12px; height: 12px; border-radius: 3px; background: #d7262e; }
.tab-doc { width: 208px; padding-left: 8px; background: #2b2d30; color: #c6c6c6; }
.logo-pdf { width: 14px; height: 14px; border-radius: 1px; background: #bd4a58; display: flex; align-items: center; justify-content: center; }
.doc-name { width: 146px; margin-left: 3px; font-size: 11px; white-space: nowrap; }
.tab-doc .ic10 { margin-left: 5px; }
.tab-plus { align-self: center; margin-left: 8px; color: #cfcfcf; }
.win-ctrls { margin-left: auto; display: flex; align-items: center; padding-right: 6px; gap: 12px; color: #a4a4a4; }
.win-1 { position: relative; width: 13px; height: 12px; line-height: 10px; margin-right: -2px; border: 1px solid #aaa; color: #ccc; text-align: center; font-size: 9px; box-shadow: 2px 0 0 -0.5px #555, 4px 0 0 -0.5px #444; }
.vsep { width: 1px; height: 8px; background: #3c3c3c; margin: 0 -4px; }
.avatar { width: 18px; height: 18px; border-radius: 50%; background: radial-gradient(circle at 50% 40%, #a6a88f, #5a6246 70%); }

/* menubar */
.menubar { display: flex; align-items: center; height: 30px; flex: none; padding-left: 12px; background: #2b2d30; border-bottom: 1px solid #3a3c3f; }
.menu-file { margin-left: 4px; }
.m-chev { margin-left: 6px; }
.menu-sep { width: 1px; height: 18px; background: #3d3f42; margin-left: 8px; }
.quick { display: flex; align-items: center; gap: 6px; margin-left: 7px; margin-right: 2px; }
.pill { width: 36px; height: 17px; line-height: 17px; margin-left: 5px; text-align: center; border-radius: 9px; background: #8e4652; color: #f3e6e8; }
.menu-items { display: flex; gap: 20.7px; margin-left: 12px; }
.searchbox { display: flex; align-items: center; gap: 2px; width: 146px; height: 20px; margin-left: 20px; padding-left: 7px; border-radius: 10px; background: #303235; color: #7d7f81; }
.menu-right { margin-left: auto; display: flex; align-items: center; gap: 8px; padding-right: 12px; }
.mr { display: flex; align-items: center; gap: 2px; }
.mr2 { margin-right: -2px; }

/* toolbar */
.toolbar { display: grid; height: 51px; flex: none; padding-left: 8px; background: #2b2d30; border-bottom: 1px solid #1d1e20; grid-template-columns: 50px 8px 70px 64px 56px 4px 34px 48px 6px 111px 44px 8px 155px 62px 2px 72px 30px 60px 32px 48px; }
.t-sep { width: 1px; height: 44px; margin: 3px auto 0; background: #37393c; }
.tcol { display: flex; flex-direction: column; align-items: center; padding-top: 7px; white-space: nowrap; }
.tcol span { margin-top: 1px; line-height: 14px; }
.hand { display: flex; flex-direction: column; padding: 5px 0 0 3px; gap: 2px; }
.hand-row { display: flex; align-items: center; gap: 2px; height: 19px; width: 42px; padding-left: 3px; white-space: nowrap; }
.hand-row.sel { background: #7d4049; border-radius: 3px; color: #f0dfe1; }
.zoomg { padding-top: 5px; }
.zoom-row { display: flex; align-items: center; }
.zoom-sel { display: flex; align-items: center; justify-content: space-between; width: 62px; height: 18px; margin-left: 1px; margin-right: 7px; padding: 0 4px 0 8px; border: 1px solid #4a4c4f; border-radius: 3px; font-size: 10.5px; }
.zoom-row .ic14 + .ic14 { margin-left: 5px; }
.zoom-row2 { display: flex; align-items: center; gap: 6.5px; margin: 8px 0 0 4px; }
.navg { padding-top: 5px; }
.nav-row { display: flex; align-items: center; height: 19px; padding-left: 5px; }
.nav-input { width: 112px; height: 19px; line-height: 17px; margin: 0 8px; border: 1px solid #55575a; background: #26282a; text-align: center; color: #ddd; font-size: 10.5px; }
.view-row { display: flex; align-items: center; margin-top: 1px; padding-left: 1px; }
.view { display: flex; align-items: center; gap: 3px; height: 20px; border-radius: 3px; padding-left: 3px; white-space: nowrap; }
.view.sel { background: #7d4049; color: #f0dfe1; }
.v-one { width: 41px; }
.v-two { width: 48px; margin-left: 1px; padding-left: 0; }
.v-cont { width: 61px; }
.trang { display: flex; flex-direction: column; gap: 5px; padding: 6px 0 0 5px; }
.trang span { display: flex; align-items: center; gap: 3px; height: 16px; white-space: nowrap; }
.trang .caret { margin-left: 2px; }

/* main */
.main { flex: 1; min-height: 0; display: flex; }
.rail { width: 37px; flex: none; display: flex; flex-direction: column; align-items: center; gap: 15.5px; padding-top: 14px; background: #2b2d30; border-right: 1px solid #202123; color: #d0d0d0; }
.rail-sel { width: 27px; height: 27px; margin: -7px 0 -6px; display: flex; align-items: center; justify-content: center; background: #8a4550; border-radius: 3px; color: #f1dcdf; }

.thumbs { position: relative; width: 218px; flex: none; display: flex; flex-direction: column; background: #2b2d30; border-right: 1px solid #1e1f21; }
.th-title { display: flex; align-items: center; justify-content: space-between; height: 40px; padding: 1px 15px 0 9px; font-size: 10.4px; }
.th-slider { display: flex; align-items: center; height: 20px; padding-left: 14px; }
.th-track { position: relative; width: 133px; height: 1px; margin: 0 12px 0 14px; background: #4e5053; }
.th-fill { position: absolute; left: 0; top: -0.5px; width: 21px; height: 2px; background: #e6e6e6; }
.th-knob { position: absolute; left: 16px; top: -5px; width: 10px; height: 10px; border-radius: 50%; background: #f0f0f0; }
.th-list { flex: 1; min-height: 0; overflow: hidden; margin: 0 9px; padding: 17px 0 0 19px; border-top: 1px solid #3b3d40; }
.th-card { width: 148px; height: 217px; padding: 8px 7px; background: #3b3d40; border-radius: 3px; }
.th-card:nth-child(3), .th-card:nth-child(5) { background: #333537; }
.th-label { width: 64px; height: 20px; line-height: 20px; margin: 5px 0 9px 42px; text-align: center; border-radius: 2px; background: #3d3f42; color: #d6d6d6; font-size: 10.5px; }
.th-label2 { background: transparent; border-bottom: 1px solid #3d3f42; margin: 5px 0 11px 40px; width: 68px; height: 21px; }
.th-scroll { position: absolute; right: 2px; top: 102px; width: 6px; height: 37px; background: #3b3d40; border-radius: 3px; }

.thumb { position: relative; height: 201px; padding: 2px 3px 0; overflow: hidden; background: #d0e4c0; color: #1b1b1b; font-family: "Liberation Serif", serif; font-size: 3.65px; line-height: 4.3px; font-weight: 700; text-align: justify; filter: blur(.15px); }
.thumb p { margin-bottom: 3px; }
.tt-head { display: flex; justify-content: space-between; padding-bottom: .5px; border-bottom: 1px solid #111; }
.tt-mech { --lw: 5px; width: 82px; height: 42px; margin: 6.5px 0 0 23px; }
.tt-cap { text-align: center; margin-top: 8px; margin-bottom: 5.7px !important; }
.tt-eq { text-align: center; }
.tt-gap { margin-top: 5px; }
.tt-foot { margin-top: 5px; color: #15158c; text-align: center; font-family: "Liberation Sans", sans-serif; font-size: 2.7px; line-height: 4px; white-space: nowrap; }
.tt-foot2 { margin-top: 6px; }
.thumb-dim { position: absolute; left: 0; right: 0; top: 126px; bottom: 0; background: rgba(70, 70, 70, .22); }
.thumb-view { position: absolute; left: 0; right: 0; top: 0; height: 126px; border: 1px solid #17202e; border-bottom-width: 1.5px; }
.thumb-view i { position: absolute; right: 0; bottom: 0; width: 4px; height: 4px; background: #34508a; }
.tt-mech2 { width: 128px; height: 22px; margin-top: 7px; fill: none; stroke: #222; stroke-width: 2.5; }
.tt-small { display: flex; justify-content: space-around; padding: 0 18px; margin-top: 2px; }
.tt-bold { margin-top: 3px; }
.tt-m { margin-top: 3px; }

/* mech drawing */
.m { fill: none; stroke: #2c2f2a; stroke-width: var(--lw, 2px); }
.m path { fill: #cee1c0; }
.m .thick { stroke-width: var(--lw, 4.5px); fill: none; }
.m circle { fill: #cee1c0; }
.m .bar-o { stroke-width: calc(38px + 2 * var(--lw, 2px)); stroke-linecap: round; }
.m .bar-i { stroke-width: 38px; stroke-linecap: round; stroke: #cee1c0; }

/* document */
.doc { position: relative; flex: none; width: 759px; overflow: hidden; background: #d3e6c9; display: flex; flex-direction: column; align-items: center; color: #232323; font-family: "Liberation Serif", serif; font-size: 14.8px; line-height: 16px; }
.doc i { font-style: italic; }
.page { width: 500px; padding: 0 11px 0 12px; background: #cee1c0; flex: none; filter: blur(.2px); }
.page-a { height: 119px; margin-top: -6px; }
.page-b { margin-top: 2px; padding-top: 5px; flex: 1; }
.ln { text-align: justify; text-align-last: justify; letter-spacing: .1px; white-space: nowrap; }
.ln.clip { height: 16px; }
.end-a { padding-right: 202px; }
.end-b { padding-right: 12px; }
.end-c { padding-right: 341px; }
.end-d { padding-right: 92px; }
.ln sub { font-size: 9.5px; line-height: 0; vertical-align: -2.5px; }
.lnk { font-weight: 400; color: #1f2f9e; }
.eq { text-align: center; margin-top: 15px; word-spacing: .5px; }
.eq1 { letter-spacing: .2px; word-spacing: 1px; }
.foot { margin-top: 20px; text-align: center; font-family: "Liberation Sans", sans-serif; font-size: 9.8px; color: #1a1a94; letter-spacing: .1px; }
.head { display: flex; justify-content: space-between; height: 17px; border-bottom: 1px solid #222; letter-spacing: .25px; font-size: 13.5px; }
.fig { width: 310px; height: 160px; margin: 27px 0 0 83px; }
.cap { text-align: center; margin: 25px 0 26px; font-size: 13.2px; letter-spacing: .3px; }
.eq2 { margin: 11px 0 12px; }
.fab { position: absolute; left: 732px; top: 10px; width: 24px; height: 24px; border-radius: 50%; border: 2px solid #fff; background: #3f7fe0; display: flex; align-items: center; justify-content: center; }
.pointer { position: absolute; left: 359px; top: 213px; width: 12px; height: 18px; }

.vscroll { position: relative; width: 12px; flex: none; background: #2b2d30; border-right: 1px solid #202123; }
.vs-up { position: absolute; left: 3px; top: 7px; border-left: 3px solid transparent; border-right: 3px solid transparent; border-bottom: 3px solid #777; }
.vs-down { position: absolute; left: 3px; bottom: 5px; border-left: 3px solid transparent; border-right: 3px solid transparent; border-top: 3px solid #777; }
.vs-thumb { position: absolute; left: 1px; top: 49px; width: 9px; height: 33px; border-radius: 4px; background: #4d4f52; }

/* translate panel */
.trans { width: 219px; flex: none; display: flex; flex-direction: column; padding: 0 12px 10px 10px; background: #2b2d30; }
.tr-head { display: flex; align-items: center; gap: 7px; height: 26px; margin: 0 -5px 0 -4px; }
.tr-title { margin-right: auto; color: #c8c8c8; }
.tr-langs { display: flex; align-items: center; margin: 25px 0 12px 2px; }
.tr-sel { display: flex; align-items: center; width: 84px; height: 21px; padding: 0 6px; border-radius: 2px; background: #fff; color: #555; letter-spacing: .3px; }
.tr-swap { width: 25px; text-align: center; color: #777; font-size: 12px; }
.tr-input { display: flex; align-items: center; justify-content: space-between; width: 197px; height: 25px; padding: 0 6px 0 8px; border-radius: 2px; background: #fff; color: #555; font-size: 10.7px; }
.tr-clear { width: 8px; height: 8px; line-height: 8px; border-radius: 50%; background: #e6e6e6; text-align: center; font-size: 9px; color: #666; }
.tr-btn { width: 197px; height: 32px; line-height: 32px; margin-top: 9px; border-radius: 3px; background: #de4356; color: #fde8ea; text-align: center; font-size: 11.5px; }
.tr-body { position: relative; width: 197px; margin-top: 10px; flex: 1; min-height: 0; background: #fff; display: flex; flex-direction: column; padding: 0 7px; border-bottom: 2px solid #c6c6c6; color: #555; }
.tr-bar { display: flex; align-items: center; justify-content: flex-end; gap: 12px; height: 28px; border-bottom: 1px solid #e0e0e0; padding-right: 3px; color: #6b6e78; }
.tr-bar svg { margin-right: auto; margin-left: 3px; color: #aaa; }
.tr-text { margin: 11px 0 0 2px; color: #333; font-size: 10.4px; }
.tr-src { margin-top: auto; margin-bottom: 10px; text-align: right; color: #c9c9c9; font-size: 9.5px; }
.tr-promo { width: 197px; height: 68px; padding: 11px 24px 0; background: #fff; text-align: center; color: #8a8a90; font-size: 9.6px; line-height: 14px; }
.tr-promo a { display: inline-block; margin-top: 4px; color: #2e63be; text-decoration: underline; }

.rrail { flex: 1; display: flex; flex-direction: column; align-items: center; padding-top: 11px; background: #2a2c2e; border-left: 1px solid #232426; color: #c6c6c6; }
.rr-lines { width: 17px; height: 4px; border-top: 1px solid #4a4c4e; border-bottom: 1px solid #4a4c4e; }
.rrail > .ic14 { margin-top: 14px; }
.rr-sel { width: 28px; height: 28px; margin-top: 10px; margin-bottom: -7px; display: flex; align-items: center; justify-content: center; background: #7c3f47; border-radius: 3px; color: #efdbdd; }
.rr-fill { flex: 1; width: 100%; border-bottom: 1px solid #323436; margin-bottom: 15px; }
.rrail > .ic13 { margin-bottom: 8px; }

/* status */
.status { display: flex; align-items: center; height: 23px; flex: none; padding-left: 11px; background: #2b2d30; border-top: 1px solid #1e1f21; color: #c4c4c4; }
.s-nav { margin-left: 4px; }
.s-sep { width: 1px; height: 14px; margin: 0 3px; background: #3d3f42; }
.s-sep1 { margin: 0 0 0 10px; }
.s-sep-a { margin-right: 1px; }
.s-first { margin-left: 12px; }
.s-prev { margin-left: 8px; }
.s-input { width: 92px; height: 19px; line-height: 17px; margin-left: 9px; border: 1px solid #4a4c4f; background: #232527; text-align: center; font-size: 10.5px; color: #ddd; }
.s-next { margin-left: 11px; }
.s-last { margin-left: 9px; }
.s-right { margin-left: auto; display: flex; align-items: center; gap: 6px; padding-right: 11px; }
.s-right > .caret { margin-left: -4px; }
.s-sel { width: 18px; height: 18px; display: flex; align-items: center; justify-content: center; border-radius: 3px; background: #8a4550; color: #f0dcdf; }
.s-sel2 { margin-left: -4px; }
.s-dbl { margin: 0 2px 0 -2px; }
.s-play { position: relative; width: 20px; height: 16px; border-radius: 2px; background: #55678e; margin: 0 1px; }
.s-play::after { content: ""; position: absolute; left: 7px; top: 4px; border-left: 6px solid #f0f0f0; border-top: 4px solid transparent; border-bottom: 4px solid transparent; }
.s-zoom { font-size: 10.5px; margin-right: 3px; white-space: nowrap; }
.s-track { position: relative; width: 115px; height: 1px; margin: 0 2px; background: #4a4c4e; }
.s-fill { position: absolute; left: 0; top: 0; width: 57px; height: 1px; background: #8a4550; }
.s-knob { position: absolute; left: 53px; top: -4px; width: 9px; height: 9px; border-radius: 50%; background: #f2f2f2; }
.s-full { margin-left: 3px; }
```
